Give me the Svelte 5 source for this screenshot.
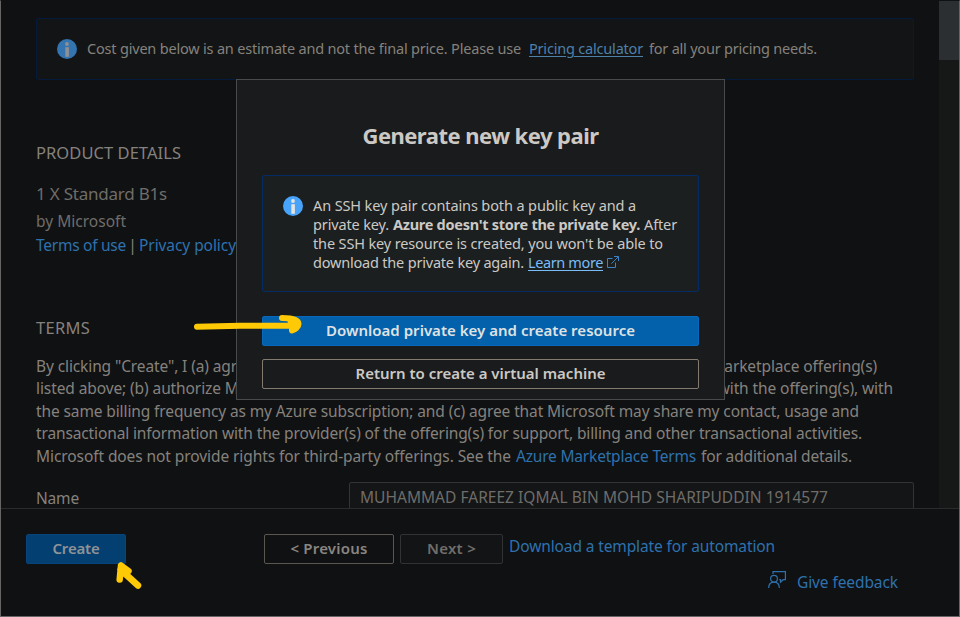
<script>
  // Tracks a run of text so that it fills the given measure.
  function fit(node, width) {
    const natural = node.getBoundingClientRect().width;
    const spacing = (width - natural) / node.textContent.length;
    node.style.letterSpacing = `${spacing.toFixed(4)}px`;
  }

  const terms = [
    { text: 'By clicking "Create", I (a) agree to the legal terms and privacy statement(s) associated with the Marketplace offering(s)', width: 841 },
    { text: 'listed above; (b) authorize Microsoft to bill my current payment method for the fees associated with the offering(s), with', width: 857 },
    { text: 'the same billing frequency as my Azure subscription; and (c) agree that Microsoft may share my contact, usage and', width: 823 },
    { text: 'transactional information with the provider(s) of the offering(s) for support, billing and other transactional activities.', width: 826 },
  ];
</script>

{#snippet info()}
  <svg class="info" viewBox="0 0 20 20" width="20" height="20">
    <circle class="disc" cx="10" cy="10" r="10" />
    <circle class="mark" cx="10" cy="5" r="1.9" />
    <rect class="mark" x="8.3" y="8.2" width="3.6" height="9.6" />
  </svg>
{/snippet}

<div class="page">
  <div class="scroll">
    <main>
      <div class="notice">
        {@render info()}
        <p>
          <span use:fit={434}>Cost given below is an estimate and not the final price. Please use</span>
          <a class="price" href="#calc" use:fit={114}>Pricing calculator</a>
          <span use:fit={168}>for all your pricing needs.</span>
        </p>
      </div>

      <h2 class="details"><span use:fit={145}>PRODUCT DETAILS</span></h2>
      <p class="product"><span use:fit={131}>1 X Standard B1s</span></p>
      <p class="vendor"><span use:fit={90}>by Microsoft</span></p>
      <p class="links"><a href="#terms" use:fit={90}>Terms of use</a><i>|</i><a href="#privacy" use:fit={97}>Privacy policy</a></p>

      <h2 class="termshead"><span use:fit={54}>TERMS</span></h2>
      <div class="legal">
        {#each terms as line}
          <p><span use:fit={line.width}>{line.text}</span></p>
        {/each}
        <p class="last">
          <span use:fit={475}>Microsoft does not provide rights for third-party offerings. See the</span>
          <a href="#market" use:fit={180}>Azure Marketplace Terms</a>
          <span use:fit={151}>for additional details.</span>
        </p>
      </div>

      <div class="field">
        <label for="name"><span use:fit={43}>Name</span></label>
        <div class="input" id="name"><span use:fit={468}>MUHAMMAD FAREEZ IQMAL BIN MOHD SHARIPUDDIN 1914577</span></div>
      </div>
    </main>
    <div class="bar"><div class="thumb"></div></div>
  </div>

  <footer>
    <button class="create"><span use:fit={47}>Create</span></button>
    <button class="prev"><span use:fit={77}>&lt; Previous</span></button>
    <button class="next"><span use:fit={49}>Next &gt;</span></button>
    <div class="side">
      <a href="#template" use:fit={266}>Download a template for automation</a>
      <div class="feedback">
        <svg viewBox="0 0 18 17" width="18" height="17">
          <path d="M5 3V.7h12.4v8h-2.2l-2.7 2.5V8.7h-1.2" />
          <circle cx="6" cy="7.7" r="3.4" />
          <path d="M.6 17c.2-3.6 2.3-5.8 5.4-5.8s5.2 2.2 5.4 5.8" />
        </svg>
        <a href="#feedback" use:fit={101}>Give feedback</a>
      </div>
    </div>
  </footer>

  <section class="dialog">
    <h1><span use:fit={236}>Generate new key pair</span></h1>
    <div class="callout">
      {@render info()}
      <div>
        <p><span use:fit={323}>An SSH key pair contains both a public key and a</span></p>
        <p><span use:fit={76}>private key.</span><b use:fit={247}>Azure doesn't store the private key.</b><span use:fit={33}>After</span></p>
        <p><span use:fit={350}>the SSH key resource is created, you won't be able to</span></p>
        <p>
          <span use:fit={211}>download the private key again.</span>
          <a class="more" href="#more" use:fit={75}>Learn more</a>
          <svg class="ext" viewBox="0 0 12 12" width="12" height="12">
            <path d="M5.5 2.5h-5v9h8v-5M4.3 7.7 11.2.8M7 .5h4.5V5" />
          </svg>
        </p>
      </div>
    </div>
    <button class="primary"><span use:fit={309}>Download private key and create resource</span></button>
    <button class="back"><span use:fit={250}>Return to create a virtual machine</span></button>
  </section>

  <svg class="ink" viewBox="0 0 960 617" width="960" height="617">
    <path d="M197 326.800L240 325.800L292 325.700" />
    <path d="M282 318C290 318 298.500 319.500 298.500 324C298.500 327 295 330 292 330.500" />
    <path class="fill" d="M287 319L298 321L299 326L290 332Z" />
    <path class="pointer" d="M128.500 571L121 565.500L119.700 579.500M120.500 569.500L138 585.500" />
  </svg>
</div>

<style>
  :global(body) { background: #101112; }
  * { box-sizing: border-box; }
  .page {
    position: relative;
    width: 960px;
    height: 617px;
    overflow: hidden;
    display: flex;
    flex-direction: column;
    border: 1px solid #656565;
    border-top-color: #101112;
    background: #101113;
    color: #85827d;
    font: 15.500px/20px "Noto Sans", "Open Sans", sans-serif;
  }
  p, h1, h2 { margin: 0; font-weight: 400; }
  span, a, b { display: inline-block; white-space: pre; flex: none; }
  a { color: #2e71ad; text-decoration: none; }
  .scroll { height: 507px; flex: none; display: flex; overflow: hidden; }
  main { flex: 1; padding: 17px 25px 0 35px; }
  .bar { width: 20px; background: #161817; }
  .thumb { height: 59px; background: #2c2f32; }
  .notice {
    height: 62px;
    padding: 0 20px;
    display: flex;
    align-items: center;
    gap: 10px;
    border: 1px solid #041b3e;
    border-radius: 2px;
    background: #131415;
    font-size: 14.500px;
  }
  .notice p { display: flex; padding-bottom: 2px; }
  .price { margin: 0 6px 0 8px; text-decoration: underline; text-underline-offset: 2px; color: #4d80aa; }
  .info { flex: none; display: block; }
  .disc { fill: #3474b1; }
  .mark { fill: #8e9093; }
  h2 { font-size: 16.500px; line-height: 22px; }
  .details { margin-top: 62px; }
  .product { margin-top: 19px; font-size: 17px; line-height: 22px; color: #6f6d69; }
  .vendor { margin-top: 6px; color: #6f6d69; }
  .links { margin-top: 4px; display: flex; }
  .links i { width: 13px; text-align: center; font-style: normal; }
  .termshead { margin-top: 62px; }
  .legal { margin-top: 16px; }
  .legal p { height: 22.400px; line-height: 22.400px; }
  .last { display: flex; gap: 5px; }
  .field { margin-top: 15px; display: flex; }
  .field label { width: 313px; padding-top: 6px; }
  .input {
    flex: 1;
    height: 40px;
    padding: 4px 10px;
    border: 1px solid #313334;
    border-radius: 2px;
    background: #141517;
    color: #6f6d69;
  }
  footer {
    flex: 1;
    display: flex;
    padding: 25px 25px 0;
    border-top: 1px solid #2a2b2c;
  }
  button {
    height: 30px;
    padding: 0 0 2px;
    display: flex;
    align-items: center;
    justify-content: center;
    border: 1px solid;
    border-radius: 2px;
    background: transparent;
    font: 600 15px/20px "Noto Sans", "Open Sans", sans-serif;
  }
  .create { width: 100px; margin-right: 138px; border-color: #06447c; background: #033f71; color: #8f9396; }
  .prev { width: 130px; margin-right: 6px; border-color: #5b5650; color: #898580; }
  .next { width: 103px; border-color: #303233; background: #131416; color: #706e6a; }
  .side { flex: 1; padding: 2px 0 0 6px; }
  .side > a { display: block; width: max-content; }
  .feedback { margin-top: 16px; padding-left: 259px; display: flex; gap: 11px; }
  .feedback svg { flex: none; margin-top: -1px; }
  .feedback path, .feedback circle { fill: none; stroke: #2e71ad; stroke-width: 1.2; }
  .dialog {
    position: absolute;
    left: 235px;
    top: 78px;
    width: 489px;
    height: 321px;
    padding: 41px 25px 0;
    border: 1px solid #484b4b;
    background: #1a1b1d;
    color: #ccc9c4;
  }
  h1 { font-size: 22px; line-height: 28px; font-weight: 700; text-align: center; }
  .callout {
    height: 117px;
    margin-top: 26px;
    padding: 20px 20px 0;
    display: flex;
    gap: 10px;
    border: 1px solid #042b63;
    border-radius: 2px;
    background: #1b1f20;
    font-size: 14.500px;
  }
  .callout p { display: flex; gap: 4px; height: 19px; line-height: 19px; }
  .callout .disc { fill: #48a3fb; }
  .callout .mark { fill: #e4e4e2; }
  .more { color: #7abcf5; text-decoration: underline; text-underline-offset: 2px; }
  .ext { margin-top: 3px; }
  .ext path { fill: none; stroke: #3b83c5; }
  .dialog button { width: 437px; }
  .dialog .primary { margin: 24px 0 13px; border-color: #0868bb; background: #0360aa; color: #dfe2e4; }
  .dialog .back { border-color: #837b70; color: #ccc9c4; }
  .ink { position: absolute; left: -1px; top: -1px; pointer-events: none; }
  .ink path { fill: none; stroke: #ffc905; stroke-width: 6; stroke-linecap: round; stroke-linejoin: round; }
  .ink .fill { fill: #ffc905; stroke: none; }
  .ink .pointer { stroke-width: 6.500; }
</style>
